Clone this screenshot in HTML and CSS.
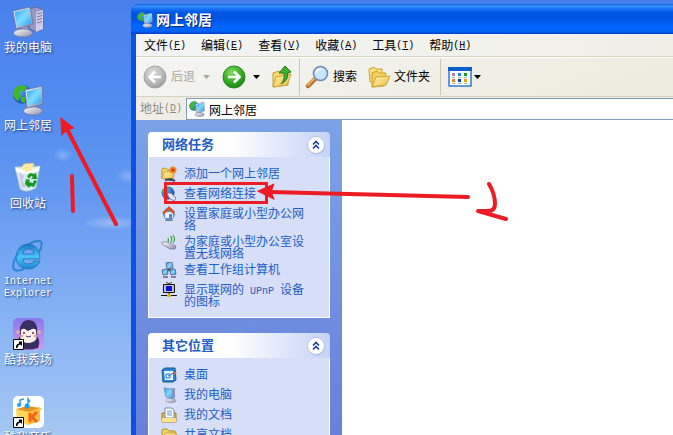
FILE: index.html
```html
<!DOCTYPE html>
<html lang="zh-CN">
<head>
  <meta charset="UTF-8" />
  <meta name="viewport" content="width=device-width, initial-scale=1.0"/>
  <title>网上邻居</title>
  <link rel="stylesheet" href="styles.css">
</head>
<body>
  <!-- shared icons -->
  <svg class="defs" aria-hidden="true">
    <defs>
      <linearGradient id="screen" x1="0" y1="0" x2="1" y2="1">
        <stop offset="0" stop-color="#2fa2f0"/><stop offset=".5" stop-color="#7fdcff"/><stop offset="1" stop-color="#2a98ea"/>
      </linearGradient>
      <linearGradient id="metal" x1="0" y1="0" x2="1" y2="1">
        <stop offset="0" stop-color="#ffffff"/><stop offset="1" stop-color="#8d8cab"/>
      </linearGradient>
      <linearGradient id="paper" x1="0" y1="0" x2="1" y2="1">
        <stop offset="0" stop-color="#fff6b5"/><stop offset="1" stop-color="#efba3c"/>
      </linearGradient>
      <radialGradient id="globe" cx=".35" cy=".3" r=".8">
        <stop offset="0" stop-color="#58b4f8"/><stop offset="1" stop-color="#0b3d9c"/>
      </radialGradient>
      <radialGradient id="greenBall" cx=".4" cy=".3" r=".8">
        <stop offset="0" stop-color="#7fdc62"/><stop offset=".6" stop-color="#2fa81e"/><stop offset="1" stop-color="#14780f"/>
      </radialGradient>
      <radialGradient id="greyBall" cx=".4" cy=".3" r=".8">
        <stop offset="0" stop-color="#dcdcdc"/><stop offset=".7" stop-color="#b0b0b0"/><stop offset="1" stop-color="#8f8f8f"/>
      </radialGradient>
      <linearGradient id="showBg" x1="0" y1="0" x2="0" y2="1">
        <stop offset="0" stop-color="#8878ec"/><stop offset="1" stop-color="#d39af0"/>
      </linearGradient>
      <linearGradient id="ieBlue" x1="0" y1="0" x2="0" y2="1">
        <stop offset="0" stop-color="#1672c8"/><stop offset=".5" stop-color="#49c4f8"/><stop offset="1" stop-color="#1c85d8"/>
      </linearGradient>
    </defs>
    <symbol id="network" viewBox="0 0 32 32">
      <circle cx="10" cy="10" r="9.5" fill="url(#globe)"/>
      <path d="M2 6Q5 1 11 1L15 3L12 7L7 8L9 12L6 17Q0 13 1 8ZM9 13L14 13L13 19L9 18Z" fill="#43b72c"/>
      <path d="M19 22L24 21L26 26L20 28Z" fill="#9a99b8"/>
      <ellipse cx="21" cy="27" rx="9.5" ry="4" fill="url(#metal)" stroke="#73728f" stroke-width=".7"/>
      <path d="M13 6L30 2L31 20L15 24Z" fill="url(#metal)" stroke="#6873a8" stroke-width=".8"/>
      <path d="M14.500 7.500L28.500 4L29.500 18.500L16.500 22Z" fill="url(#screen)"/>
    </symbol>
    <symbol id="computer" viewBox="0 0 32 32">
      <path d="M17 3L25 1L31 4L31 23L24 26L17 22Z" fill="#9a97c2" stroke="#66648e" stroke-width=".8"/>
      <path d="M24 6L31 4L31 23L24 26Z" fill="#cfcde6"/>
      <path d="M25 8L30 6.500M25 11L30 9.500M25 14L30 12.500M25 17L30 15.500" stroke="#77749f" stroke-width="1"/>
      <path d="M9 21L15 20L17 25L11 27Z" fill="#9a99b8"/>
      <ellipse cx="11" cy="27" rx="9.500" ry="4" fill="url(#metal)" stroke="#73728f" stroke-width=".7"/>
      <path d="M1 5L18 1L21 18L4 23Z" fill="url(#metal)" stroke="#6873a8" stroke-width=".8"/>
      <path d="M2.500 6L17 2.500L19.500 17.500L5 21Z" fill="url(#screen)"/>
    </symbol>
    <symbol id="shortcut" viewBox="0 0 11 11">
      <path d="M.5 .5H10.500V10.500H.5Z" fill="#fff" stroke="#000"/>
      <path d="M3 9Q2.500 5 6 4.500V2.500H4.500H9V7L7.500 5.500Q4.500 6 4.500 9Z" fill="#000"/>
    </symbol>
    <symbol id="folder" viewBox="0 0 16 16">
      <path d="M1 3L2 2H6L8 4H14V13H1Z" fill="#f5d566" stroke="#b48a25"/>
      <path d="M1 14L4 6H15.500L13.500 14Z" fill="url(#paper)" stroke="#c2942a" stroke-width=".8"/>
    </symbol>
    <symbol id="chevrons" viewBox="0 0 20 20">
      <circle cx="10.500" cy="11" r="8.500" fill="#8c9fd0" opacity=".5"/>
      <circle cx="10" cy="10" r="8.500" fill="#fff" stroke="#b7c3e3"/>
      <path d="M7 9.500L10 6.500L13 9.500M7 13.500L10 10.500L13 13.500" fill="none" stroke="#1c3f94" stroke-width="1.600"/>
    </symbol>
    <symbol id="caret" viewBox="0 0 7 4">
      <path d="M0 0H7L3.500 4Z" fill="currentColor"/>
    </symbol>
  </svg>

  <ul class="desktop">
    <li>
      <a href="#"><svg viewBox="0 0 32 32"><use href="#computer"/></svg><span>我的电脑</span></a>
    </li>
    <li>
      <a href="#"><svg viewBox="0 0 32 32"><use href="#network"/></svg><span>网上邻居</span></a>
    </li>
    <li>
      <a href="#">
        <svg viewBox="0 0 32 32">
          <path d="M8 7L12 2L21 1L24 8Z" fill="#fff1b8" stroke="#d8b860" stroke-width=".7"/>
          <path d="M3 5L28 4L24 26Q14 32 8 27Z" fill="#e4f2f6" stroke="#a3bcc8" opacity=".92"/>
          <path d="M3 5Q15 12 28 4L27 9Q15 14 4 10Z" fill="#fff" opacity=".85"/>
          <path d="M9 7L12 3L20 2L21 8L15 10Z" fill="#ffe9a0"/>
          <path d="M7 10L12 14L10 19L15 24L10 26Z" fill="#c9c8dc"/>
          <path d="M15 14L18 11L23 12L24 10L25 17L19 17L21 15L19 14L17 17Z" fill="#159b22"/>
          <path d="M14 17L18 18L17 20L21 21L22 18L25 19L22 25L18 24L17 26L13 22Z" fill="#159b22"/>
        </svg>
        <span>回收站</span>
      </a>
    </li>
    <li>
      <a href="#">
        <svg viewBox="0 0 32 32">
          <path d="M7 12Q19 0 28 1Q32 3 27 12" fill="none" stroke="#2e83c8" stroke-width="2"/>
          <path d="M22 21H28Q25 29 16 29Q4 28 4 17Q5 5 16 4Q28 5 28 19H11Q11 24 16 24Q20 24 22 21ZM11 14H22Q21 9 16 9Q12 9 11 14Z" fill="url(#ieBlue)" stroke="#1b6cad" stroke-width=".7"/>
          <path d="M6 13Q-2 27 3 30Q8 32 15 27" fill="none" stroke="#2488d4" stroke-width="2"/>
        </svg>
        <span class="latin">Internet Explorer</span>
      </a>
    </li>
    <li>
      <a href="#">
        <svg viewBox="0 0 32 32">
          <rect x="1" y="0" width="31" height="32" rx="5" fill="url(#showBg)"/>
          <path d="M7 30Q4 23 8 18Q6 3 16 2Q27 2 25 18Q29 23 26 30Q16 33 7 30Z" fill="#3a2d5f"/>
          <circle cx="6" cy="14" r="2" fill="#e5a3c0"/><circle cx="27" cy="14" r="2" fill="#e5a3c0"/>
          <path d="M9 15Q8 10 13 11L16 13L20 11Q25 10 24 15Q27 24 16 25Q6 24 9 15Z" fill="#fff0e8"/>
          <circle cx="12" cy="15" r="1" fill="#3a2d5f"/><circle cx="21" cy="15" r="1" fill="#3a2d5f"/>
          <circle cx="10" cy="18" r="1.500" fill="#ffa397"/><circle cx="23" cy="18" r="1.500" fill="#ffa397"/>
          <path d="M14 18Q16 20 19 18" fill="none" stroke="#3a2d5f"/>
          <use href="#shortcut" x="1" y="21" width="11" height="11"/>
        </svg>
        <span>酷我秀场</span>
      </a>
    </li>
    <li>
      <a href="#">
        <svg viewBox="0 0 32 32">
          <rect x="1" y="0" width="31" height="32" rx="5" fill="#fff"/>
          <path d="M4 13L16 16V29L5 25Z" fill="#ffd457"/>
          <path d="M16 16L28 12V25L16 29Z" fill="#ffbc35"/>
          <path d="M4 13L16 10L28 12L16 16Z" fill="#e59021"/>
          <path d="M26 10L30 13L27 15Z" fill="#ffca4a"/>
          <path d="M18 17V26M25 16L20 21L25 26" fill="none" stroke="#f5651d" stroke-width="3"/>
          <path d="M8 9V4L12 3M16 11V3L18 6" fill="none" stroke="#249fe5" stroke-width="1.500"/>
          <circle cx="7" cy="9" r="2" fill="#249fe5"/><circle cx="15" cy="10" r="2.500" fill="#249fe5"/>
          <use href="#shortcut" x="1" y="21" width="11" height="11"/>
        </svg>
        <span>酷我音乐</span>
      </a>
    </li>
  </ul>

  <main class="window">
    <header class="titlebar">
      <svg viewBox="0 0 32 32"><use href="#network"/></svg>
      <h1>网上邻居</h1>
    </header>

    <div class="client">
      <nav class="menubar">
        <button>文件<span class="key">(<u>F</u>)</span></button>
        <button>编辑<span class="key">(<u>E</u>)</span></button>
        <button>查看<span class="key">(<u>V</u>)</span></button>
        <button>收藏<span class="key">(<u>A</u>)</span></button>
        <button>工具<span class="key">(<u>T</u>)</span></button>
        <button>帮助<span class="key">(<u>H</u>)</span></button>
      </nav>

      <div class="toolbar">
        <button class="back" disabled>
          <svg class="big" viewBox="0 0 24 24">
            <circle cx="12" cy="12" r="11" fill="url(#greyBall)" stroke="#a5a5a5"/>
            <path d="M18 12H7M12 6.500L6.500 12L12 17.500" fill="none" stroke="#fff" stroke-width="2.600"/>
          </svg>
          后退
          <svg class="caret" viewBox="0 0 7 4"><use href="#caret"/></svg>
        </button>
        <button class="forward" aria-label="前进">
          <svg class="big" viewBox="0 0 24 24">
            <circle cx="12" cy="12" r="11" fill="url(#greenBall)" stroke="#278a20"/>
            <path d="M6 12H17M12 6.500L17.500 12L12 17.500" fill="none" stroke="#fff" stroke-width="2.600"/>
          </svg>
          <svg class="caret" viewBox="0 0 7 4"><use href="#caret"/></svg>
        </button>
        <button class="up" aria-label="向上">
          <svg class="big" viewBox="0 0 24 24">
            <path d="M3 8L9 6L11 8L18 7V20L3 22Z" fill="#f8d968" stroke="#c39a35"/>
            <path d="M3 22L6 12L21 9L17 20Z" fill="url(#paper)" stroke="#cda23a"/>
            <path d="M11 19Q15 15 14 8H9L15 1L21 7L17.500 8Q19 15 11 19Z" fill="#3db02d" stroke="#217a1a"/>
          </svg>
        </button>
        <button class="search">
          <svg class="big" viewBox="0 0 24 24">
            <path d="M10 14L3 21" stroke="#b66a2e" stroke-width="4.500" stroke-linecap="round"/>
            <path d="M9.500 13.500L3 20" stroke="#f3ab5e" stroke-width="2" stroke-linecap="round"/>
            <circle cx="15.500" cy="8.500" r="7" fill="#c4e6fb" stroke="#7287bd" stroke-width="1.600"/>
            <path d="M11 8Q12 4 16 4" fill="none" stroke="#fff" stroke-width="2"/>
          </svg>
          搜索
        </button>
        <button class="folders">
          <svg class="big" viewBox="0 0 24 24">
            <path d="M2 4L7 2L9 4L15 4V16L3 17Z" fill="#f8df79" stroke="#cca235"/>
            <path d="M5 8L10 6L12 8L19 8L17 21L5 22Z" fill="#f5d25c" stroke="#cca235"/>
            <path d="M5 22L9 12L23 11L19 20Z" fill="url(#paper)" stroke="#cca235"/>
          </svg>
          文件夹
        </button>
        <button class="views" aria-label="查看方式">
          <svg class="big" viewBox="0 0 24 20">
            <rect x="1" y="1" width="22" height="18" fill="#fff" stroke="#2e79d5" stroke-width="1.500"/>
            <path d="M0 0H24V4H0Z" fill="#0a5ec9"/>
            <path d="M4 6h3v3h-3Z" fill="#9c86bd"/><path d="M10 6h3v3h-3Z" fill="#1f86e5"/><path d="M16 6h3v3h-3Z" fill="#159a27"/>
            <path d="M4 12h3v3h-3Z" fill="#e87b35"/><path d="M10 12h3v3h-3Z" fill="#113fa0"/><path d="M16 12h3v3h-3Z" fill="#dda313"/>
            <path d="M4 10.500h3M10 10.500h3M16 10.500h3M4 16.500h3M10 16.500h3M16 16.500h3" stroke="#a9b0bd"/>
          </svg>
          <svg class="caret" viewBox="0 0 7 4"><use href="#caret"/></svg>
        </button>
      </div>

      <div class="addressbar">
        <label for="address">地址<span class="key">(<u>D</u>)</span></label>
        <div class="address-box">
          <svg viewBox="0 0 32 32"><use href="#network"/></svg>
          <input type="text" id="address" value="网上邻居">
        </div>
      </div>

      <div class="content">
        <aside class="tasks">
          <section class="panel">
            <header>
              <h2>网络任务</h2>
              <button aria-label="折叠网络任务"><svg viewBox="0 0 20 20"><use href="#chevrons"/></svg></button>
            </header>
            <ul>
              <li>
                <svg viewBox="0 0 16 16">
                  <use href="#folder" width="14" height="15"/>
                  <path d="M4 14L10 13L14 15" stroke="#3b4a55" stroke-width="2"/>
                  <circle cx="12" cy="4" r="3.500" fill="#f08a24"/><circle cx="12" cy="4" r="1.500" fill="#d42b16"/>
                </svg>
                <a href="#">添加一个网上邻居</a>
              </li>
              <li>
                <svg viewBox="0 0 16 16">
                  <circle cx="7" cy="7" r="6.500" fill="url(#globe)"/>
                  <path d="M1 5Q4 0 8 1L7 5L5 7L6 11L3 12Z" fill="#3fae36"/>
                  <path d="M6 7L10 7L15 12L13 15L8 12Z" fill="#dfe6f2" stroke="#5e6f92" stroke-width=".8"/>
                </svg>
                <a href="#">查看网络连接</a>
              </li>
              <li>
                <svg viewBox="0 0 16 16">
                  <path d="M6 11H10L12 15H4Z" fill="#6f7d98"/>
                  <circle cx="8" cy="8" r="6" fill="#5b93d6"/>
                  <path d="M4 6H12V12H4Z" fill="#fff" stroke="#8e9fbe" stroke-width=".5"/>
                  <path d="M1 7L8 0L14 6L12 8L8 4L3 8Z" fill="#d8532a"/>
                  <path d="M8 8h3v4H8Z" fill="#5b84c8"/>
                </svg>
                <a href="#">设置家庭或小型办公网络</a>
              </li>
              <li>
                <svg viewBox="0 0 16 16">
                  <path d="M1 8L6 8L15 12L14 15L9 15L1 10Z" fill="url(#metal)" stroke="#74758c" stroke-width=".7"/>
                  <path d="M7 4Q8 6 7 8M9.500 2Q12 5 9.500 8.500M12 1Q15 5 12 9" fill="none" stroke="#3aa934" stroke-width="1.200"/>
                </svg>
                <a href="#">为家庭或小型办公室设置无线网络</a>
              </li>
              <li>
                <svg viewBox="0 0 16 16">
                  <path d="M8 7L4 12M8 7L12 12" stroke="#3c4a66" stroke-width="2"/>
                  <path d="M5 1L11 0L12 6L6 7Z" fill="url(#screen)" stroke="#5f6c94"/>
                  <path d="M1 8L6 7L7 12L2 13Z" fill="url(#screen)" stroke="#5f6c94"/>
                  <path d="M9 8L14 7L15 12L10 13Z" fill="url(#screen)" stroke="#5f6c94"/>
                  <path d="M2 15H7M10 15H15" stroke="#85849f" stroke-width="2"/>
                </svg>
                <a href="#">查看工作组计算机</a>
              </li>
              <li>
                <svg viewBox="0 0 16 16">
                  <path d="M5 0L8 2L11 0" fill="none" stroke="#333"/>
                  <path d="M2.500 2.500H13.500V10.500H2.500Z" fill="#c3c3c3" stroke="#111"/>
                  <path d="M5 4H11V9H5Z" fill="#0713d8"/>
                  <path d="M8 10V13M0 13.500H16" stroke="#111"/>
                  <path d="M6 12h4v3H6Z" fill="#d6b524"/>
                </svg>
                <a href="#">显示联网的<span class="latin"> UPnP </span>设备的图标</a>
              </li>
            </ul>
          </section>

          <section class="panel">
            <header>
              <h2>其它位置</h2>
              <button aria-label="折叠其它位置"><svg viewBox="0 0 20 20"><use href="#chevrons"/></svg></button>
            </header>
            <ul>
              <li>
                <svg viewBox="0 0 16 16">
                  <path d="M1 3L4 1H14L15 13L12 15H2Z" fill="#2a86d2" stroke="#155796"/>
                  <path d="M3 4H12V13H4Z" fill="#e9f5ff"/>
                  <path d="M5 7H9M5 7V11H9V8M7 9L14 5" fill="none" stroke="#2374bd"/>
                  <path d="M12 5L16 5L14 8Z" fill="#ea6730"/>
                </svg>
                <a href="#">桌面</a>
              </li>
              <li>
                <svg viewBox="0 0 16 16">
                  <path d="M9 2L14 1V11L10 13Z" fill="#8a91bd"/>
                  <ellipse cx="10" cy="13.500" rx="5" ry="2" fill="url(#metal)" stroke="#777995" stroke-width=".5"/>
                  <path d="M3 1L11 2L12 12L5 10Z" fill="url(#screen)" stroke="#8095c2"/>
                </svg>
                <a href="#">我的电脑</a>
              </li>
              <li>
                <svg viewBox="0 0 16 16">
                  <path d="M1 6H15V15H1Z" fill="#e5b743" stroke="#a67b1e"/>
                  <path d="M4 1H11L13 3V11H4Z" fill="#fff" stroke="#7289b1"/>
                  <path d="M6 4H11M6 6H11M6 8H11" stroke="#6c94d1"/>
                  <path d="M1 11H15V15H1Z" fill="#fbe491"/>
                </svg>
                <a href="#">我的文档</a>
              </li>
              <li>
                <svg viewBox="0 0 16 16"><use href="#folder"/></svg>
                <a href="#">共享文档</a>
              </li>
            </ul>
          </section>
        </aside>
        <div class="files"></div>
      </div>
    </div>
  </main>

  <!-- hand-drawn step marks -->
  <svg class="marks" width="673" height="435" viewBox="0 0 673 435" aria-hidden="true">
    <path d="M116 224L68 131M72 176L73 211M468 197L270 192M489 184Q495 194 495 204Q495 211 488 211L478 211L506 219"/>
    <path class="frame" d="M165.500 183.500H266.500V202.500H165.500Z"/>
    <path class="head" d="M61 118L74 128L67 130L62 135ZM258 191L274 184L271 192L274 199Z"/>
  </svg>
</body>
</html>
```
FILE: styles.css
```css
* {
  box-sizing: border-box;
}

body {
  margin: 0;
  height: 100vh;
  overflow: hidden;
  display: flex;
  position: relative;
  font-family: "Liberation Sans", "Noto Sans CJK SC", sans-serif;
  font-size: 12px;
  line-height: 12px;
  color: #000;
  background:
    radial-gradient(ellipse 30px 7px at 112px 223px, rgba(200, 215, 250, 0.5), transparent),
    radial-gradient(ellipse 10px 7px at 63px 155px, rgba(170, 200, 250, 0.5), transparent),
    radial-gradient(ellipse 12px 8px at 128px 176px, rgba(170, 200, 250, 0.5), transparent),
    linear-gradient(#4a80ec, #528cf0 25%, #6499f1 45%, #83b0f4 70%, #a5c7f3);
}

ul {
  list-style: none;
  margin: 0;
  padding: 0;
}

h1, h2 {
  margin: 0;
}

button {
  display: flex;
  align-items: center;
  padding: 0;
  border: none;
  background: none;
  font: inherit;
  color: inherit;
  cursor: pointer;
}

svg {
  display: block;
  flex: none;
}

.defs {
  position: absolute;
  width: 0;
  height: 0;
}

.key,
.latin {
  font-family: "Liberation Mono", monospace;
  font-size: 10px;
}

/* desktop */
.desktop {
  flex: 0 0 131px;
  min-height: 0;
  display: grid;
  grid-template-columns: 56px;
  grid-auto-rows: 78px;
  padding-top: 6px;
  overflow: hidden;
}

.desktop a {
  display: flex;
  flex-direction: column;
  align-items: center;
  gap: 4px;
  color: #fff;
  text-align: center;
  text-decoration: none;
  text-shadow: 1px 1px 2px #10306e;
}

.desktop svg {
  width: 32px;
  height: 32px;
}

/* window */
.window {
  flex: 1;
  min-width: 0;
  display: flex;
  flex-direction: column;
  margin-top: 4px;
  border-radius: 7px 0 0 0;
  background: #0a48dc;
  overflow: hidden;
}

.titlebar {
  display: flex;
  align-items: center;
  gap: 3px;
  height: 30px;
  padding: 2px 0 0 6px;
  background: linear-gradient(#0a5ce6, #3c95ff 7%, #1470f4 17%, #0055e3 30%, #0055e5 50%, #0066ff 75%, #0064fa 90%, #003dc8);
}

.titlebar svg {
  width: 16px;
  height: 16px;
}

.titlebar h1 {
  font-size: 14px;
  line-height: 16px;
  color: #fff;
  text-shadow: 1px 1px 1px #0a1f80;
}

.client {
  flex: 1;
  min-height: 0;
  display: flex;
  flex-direction: column;
  border-left: 5px solid #0c50e4;
  background: #efeee6;
}

.menubar {
  display: flex;
  gap: 15px;
  height: 23px;
  padding: 2px 0 0 8px;
  background: linear-gradient(90deg, #f2f3f4, #f0efe6);
  border-bottom: 1px solid #d8d2bd;
}

.toolbar {
  display: flex;
  align-items: center;
  height: 40px;
  padding-left: 7px;
  border-top: 1px solid #fff;
  border-bottom: 1px solid #d8d2bd;
  background: linear-gradient(160deg, #f4f5f4, #ecebdc);
}

.toolbar button {
  height: 36px;
}

.toolbar .big {
  width: 24px;
  height: 24px;
}

.toolbar .caret {
  width: 7px;
  height: 4px;
}

.toolbar .back {
  gap: 4px;
  color: #aca899;
  cursor: default;
}

.back .caret {
  margin-left: 4px;
}

.toolbar .forward {
  gap: 7px;
  margin-left: 12px;
}

.toolbar .up {
  margin-left: 10px;
  padding-right: 5px;
  border-right: 1px solid #ccc8b4;
}

.toolbar .search {
  gap: 4px;
  margin-left: 5px;
}

.toolbar .folders {
  gap: 3px;
  margin-left: 10px;
  padding-right: 10px;
  border-right: 1px solid #ccc8b4;
}

.toolbar .views {
  gap: 2px;
  margin-left: 7px;
}

.addressbar {
  display: flex;
  align-items: stretch;
  height: 23px;
  padding-top: 1px;
  background: #efeee6;
}

.addressbar label {
  flex: 0 0 50px;
  display: flex;
  align-items: center;
  padding-left: 4px;
  color: #8c897c;
}

.address-box {
  flex: 1;
  display: flex;
  align-items: center;
  gap: 4px;
  padding-left: 2px;
  border: 1px solid #7f9db9;
  border-right: none;
  background: #fff;
}

.address-box svg {
  width: 16px;
  height: 16px;
}

.address-box input {
  flex: 1;
  min-width: 0;
  padding: 0;
  border: none;
  outline: none;
  font: inherit;
}

.content {
  flex: 1;
  min-height: 0;
  display: flex;
}

.tasks {
  flex: 0 0 206px;
  display: flex;
  flex-direction: column;
  gap: 15px;
  padding: 12px 12px 0;
  background: linear-gradient(#7ba2e7, #6781da);
  overflow: hidden;
}

.files {
  flex: 1;
  background: #fff;
}

/* task panels */
.panel header {
  display: flex;
  align-items: center;
  justify-content: space-between;
  height: 25px;
  padding: 0 4px 0 14px;
  border-radius: 4px 4px 0 0;
  background: linear-gradient(90deg, #fff 45%, #c6d3f7);
}

.panel h2 {
  font-size: 13px;
  line-height: 16px;
  color: #215dc6;
}

.panel header svg {
  width: 20px;
  height: 20px;
}

.panel ul {
  display: flex;
  flex-direction: column;
  gap: 2px;
  padding: 9px 19px 9px 12px;
  border: 1px solid #fff;
  border-top: none;
  background: #d6dff7;
}

.panel li {
  display: flex;
  gap: 7px;
  min-height: 18px;
}

.panel li svg {
  width: 16px;
  height: 16px;
}

.panel a {
  padding-top: 2px;
  color: #215dc6;
  text-decoration: none;
}

/* keeps the mixed line as tall as its neighbours */
.panel .latin {
  line-height: 0;
}

/* annotations over the whole screen */
.marks {
  position: absolute;
  top: 0;
  left: 0;
  pointer-events: none;
}

.marks path {
  fill: none;
  stroke: #ed1c24;
  stroke-width: 4;
  stroke-linecap: round;
  stroke-linejoin: round;
}

.marks .frame {
  stroke-width: 3;
  stroke-linejoin: miter;
}

.marks .head {
  fill: #ed1c24;
  stroke-width: 1;
}
```
